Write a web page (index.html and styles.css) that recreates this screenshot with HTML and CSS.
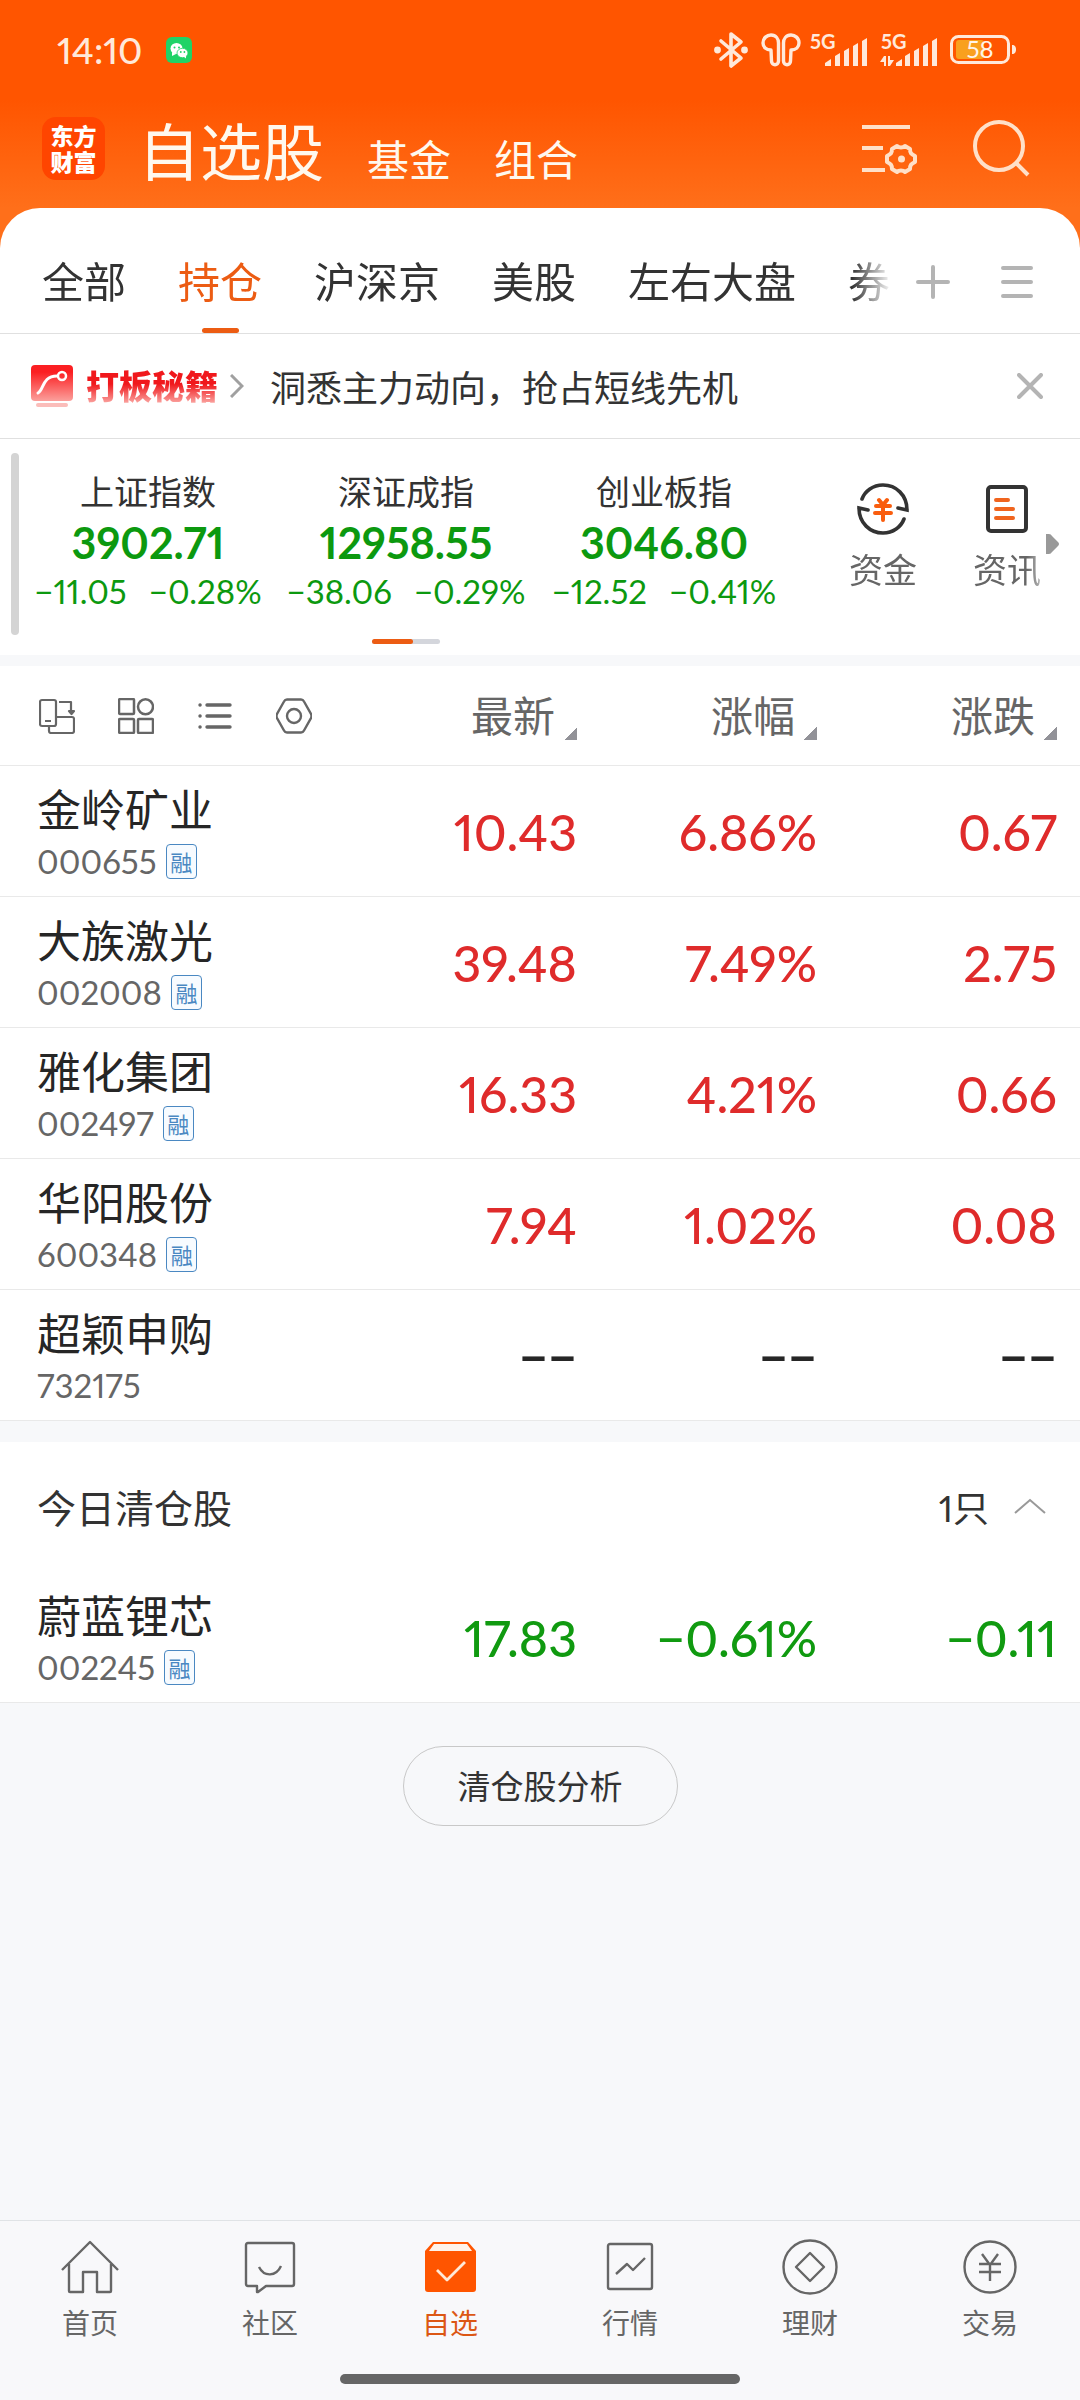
FILE: index.html
```html
<!DOCTYPE html>
<html lang="zh-CN">
<head>
<meta charset="utf-8">
<meta name="viewport" content="width=device-width, initial-scale=1">
<title>自选股</title>
<link rel="stylesheet" href="styles.css">
</head>
<body>
<div class="app">
  <header class="top">
    <div class="status">
      <span class="clock">14:10</span>
      <svg class="wechat" width="26" height="26" viewBox="0 0 26 26"><rect width="26" height="26" rx="6" fill="#1fd367"/><ellipse cx="10.500" cy="11.500" rx="6" ry="5.500" fill="#fff"/><path d="M6 15v4l4-2z" fill="#fff"/><ellipse cx="16.500" cy="16" rx="5.500" ry="4.700" fill="#fff" stroke="#1fd367" stroke-width=".8"/><path d="M17 19l3 2.500v-4z" fill="#fff"/><circle cx="8.500" cy="10.500" r="1" fill="#1fd367"/><circle cx="13" cy="10.500" r="1" fill="#1fd367"/><circle cx="14.800" cy="15" r=".9" fill="#1fd367"/><circle cx="18.400" cy="15" r=".9" fill="#1fd367"/></svg>
      <div class="system">
        <svg width="34" height="38" viewBox="0 0 34 38" fill="none" stroke="#ffe9da" stroke-width="3.600" stroke-linejoin="round" stroke-linecap="round"><path d="M7 10l20 17-10 8V3l10 8L7 28"/><circle cx="3.500" cy="19" r="1.600" fill="#ffe9da"/><circle cx="30.500" cy="19" r="1.600" fill="#ffe9da"/></svg>
        <svg width="40" height="34" viewBox="0 0 40 34" fill="none" stroke="#ffe9da" stroke-width="3.400" stroke-linejoin="round"><path d="M10 17C5 17 2 14 2 10c0-5 4-8 8-8 5 0 7.500 4 7.500 8v18c0 5-7 5-7 0z"/><path d="M30 17c5 0 8-3 8-7 0-5-4-8-8-8-5 0-7.500 4-7.500 8v18c0 5 7 5 7 0z"/></svg>
        <svg class="signal" width="57" height="40" viewBox="0 -5 57 40" fill="#ffe9da"><text x="0" y="14" class="net">5G</text><path d="M15 31v-3l6-4v7zM25 31V21l5-3v13zM34 31V16l5-3v18zM43 31V11l5-3v23zM52 31V6l5-3v28z"/></svg>
        <svg class="signal" width="57" height="40" viewBox="0 -5 57 40" fill="#ffe9da"><text x="1" y="14" class="net">5G</text><path d="M0 27l4-6h2v10H4v-4zM8 21h2v4h4l-4 6H8z"/><path d="M16 31v-3l6-4v7zM25 31V21l5-3v13zM34 31V16l5-3v18zM43 31V11l5-3v23zM52 31V6l5-3v28z"/></svg>
        <svg class="battery" width="66" height="29" viewBox="0 0 66 29"><rect x="1.500" y="1.500" width="57" height="26" rx="7" fill="none" stroke="#ffe9da" stroke-width="3"/><rect x="6" y="5" width="28" height="19" rx="3" fill="#f9a01e"/><path d="M62 10c3 0 4 2 4 4.500S65 19 62 19z" fill="#ffe9da"/><text x="30" y="23" text-anchor="middle" class="charge" fill="#fff4ea">58</text></svg>
      </div>
    </div>
    <div class="brand">
      <a class="logo" href="#"><span>东方</span><span>财富</span></a>
      <nav class="sections">
        <a class="current" href="#">自选股</a>
        <a href="#">基金</a>
        <a href="#">组合</a>
      </nav>
      <button class="tool" aria-label="管理"><svg width="56" height="56" viewBox="0 0 56 56" fill="none" stroke="#ffe0c8" stroke-width="4"><path d="M0 7h48M0 28h21M0 50h23"/><path stroke-linejoin="round" d="M35 26c2 2 6 2 8 0l5 3c0 4 1 5 5 7v6c-4 2-5 3-5 7l-5 3c-2-2-6-2-8 0l-5-3c0-4-1-5-5-7v-6c4-2 5-3 5-7z"/><circle cx="39.500" cy="39" r="3.500" fill="#ffe0c8" stroke="none"/></svg></button>
      <button class="tool" aria-label="搜索"><svg width="58" height="58" viewBox="0 0 58 58" fill="none" stroke="#ffe0c8" stroke-width="4"><circle cx="27" cy="27" r="24"/><path d="M43 43l13 13"/></svg></button>
    </div>
  </header>

  <main class="panel">
    <div class="groups">
      <nav class="tabs">
        <a href="#">全部</a>
        <a class="active" href="#">持仓</a>
        <a href="#">沪深京</a>
        <a href="#">美股</a>
        <a href="#">左右大盘</a>
        <a href="#">券</a>
      </nav>
      <button aria-label="添加分组"><svg width="34" height="34" viewBox="0 0 34 34" stroke="#b4b4b4" stroke-width="4" stroke-linecap="round"><path d="M2 17h30M17 2v30"/></svg></button>
      <button aria-label="全部分组"><svg width="32" height="32" viewBox="0 0 32 32" stroke="#b4b4b4" stroke-width="4" stroke-linecap="round"><path d="M2 2h28M2 16h28M2 30h28"/></svg></button>
    </div>

    <div class="promo">
      <svg width="42" height="42" viewBox="0 0 42 42"><defs><linearGradient id="red" x1="0" y1="0" x2="0" y2="1"><stop offset=".2" stop-color="#fb1f22"/><stop offset="1" stop-color="#fba09c"/></linearGradient></defs><rect width="42" height="36" rx="4" fill="url(#red)"/><rect x="5" y="38" width="32" height="4" rx="2" fill="#fbbdba"/><path d="M7 28c6-3 4-17 19-17" fill="none" stroke="#fff" stroke-width="3" stroke-linecap="round"/><circle cx="31" cy="11" r="4" fill="none" stroke="#fff" stroke-width="2.500"/></svg>
      <a class="promo-name" href="#">打板秘籍</a>
      <svg width="14" height="24" viewBox="0 0 14 24" fill="none" stroke="#a0a0a0" stroke-width="3"><path d="M1 1l11 11L1 23"/></svg>
      <p>洞悉主力动向，抢占短线先机</p>
      <button aria-label="关闭"><svg width="26" height="26" viewBox="0 0 26 26" stroke="#b4b4b4" stroke-width="4" stroke-linecap="round"><path d="M2 2l22 22M24 2L2 24"/></svg></button>
    </div>

    <section class="market">
      <span class="handle"></span>
      <div class="indices">
        <div class="quotes">
          <div class="quote"><h2>上证指数</h2><strong>3902.71</strong><p><span>−11.05</span><span>−0.28%</span></p></div>
          <div class="quote"><h2>深证成指</h2><strong>12958.55</strong><p><span>−38.06</span><span>−0.29%</span></p></div>
          <div class="quote"><h2>创业板指</h2><strong>3046.80</strong><p><span>−12.52</span><span>−0.41%</span></p></div>
        </div>
        <div class="pager"><span></span></div>
      </div>
      <div class="shortcuts">
        <a href="#"><svg width="52" height="52" viewBox="0 0 52 52" fill="none" stroke="#333" stroke-width="3.600"><path stroke-linecap="round" d="M5 16C8 8 16 2 26 2c13 0 24 10 24 25l-9-2M47 36C44 44 36 50 26 50 13 50 2 40 2 25l9 2"/><path stroke="#f95d0e" stroke-width="4" stroke-linecap="round" d="M22 17l4 5 4-5M26 23v14M19 23h14M18 30h16"/></svg>资金</a>
        <a href="#"><svg width="52" height="52" viewBox="0 0 52 52" fill="none" stroke="#333" stroke-width="4"><rect x="7" y="4" width="38" height="44" rx="3"/><path stroke="#f0641e" stroke-linecap="round" d="M15 17h12M15 26h17M15 35h17"/></svg>资讯</a>
      </div>
      <svg class="more" width="13" height="20" viewBox="0 0 13 20"><path d="M0 0h3q2 0 3 2l6 6q2 2 0 4l-6 6q-1 2-3 2H0z" fill="#999"/></svg>
    </section>

    <table class="stocks">
      <thead>
        <tr>
          <th scope="col">
            <div class="views">
              <button aria-label="横屏"><svg width="36" height="36" viewBox="0 0 36 36" fill="none" stroke="#666" stroke-width="2.200" stroke-linejoin="round"><rect x="1" y="2" width="16" height="26" rx="2"/><path d="M6 23h6M20 4h12v9M17 19h16q2 0 2 2v12q0 2-2 2H12q-2 0-2-2v-5"/><path d="M30 13h5l-2.500 3z" fill="#666"/></svg></button>
              <button aria-label="宫格"><svg width="36" height="36" viewBox="0 0 36 36" fill="none" stroke="#666" stroke-width="2.500"><rect x="1" y="1" width="15" height="15" rx="1"/><circle cx="27.500" cy="8.800" r="7.500"/><rect x="1" y="21" width="15" height="14" rx="1"/><rect x="20" y="21" width="15" height="14" rx="1"/></svg></button>
              <button aria-label="列表"><svg width="36" height="36" viewBox="0 0 36 36" fill="#666" stroke="#666" stroke-width="3.400" stroke-linecap="round"><path d="M10 7h23M10 18h23M10 29h23M3 7h.1M3 18h.1M3 29h.1"/></svg></button>
              <button aria-label="设置"><svg width="36" height="36" viewBox="0 0 36 36" fill="none" stroke="#666" stroke-width="2.400" stroke-linejoin="round"><path d="M11 1.500h14q2 0 3 2l7 12.500q1 2 0 4l-7 12.500q-1 2-3 2H11q-2 0-3-2L1 20q-1-2 0-4L8 3.500q1-2 3-2z"/><circle cx="18" cy="18" r="7"/></svg></button>
            </div>
          </th>
          <th scope="col"><button class="sort">最新<span></span></button></th>
          <th scope="col"><button class="sort">涨幅<span></span></button></th>
          <th scope="col"><button class="sort">涨跌<span></span></button></th>
        </tr>
      </thead>
      <tbody class="up">
        <tr><th scope="row"><div class="name">金岭矿业</div><div class="code">000655<em>融</em></div></th><td>10.43</td><td>6.86%</td><td>0.67</td></tr>
        <tr><th scope="row"><div class="name">大族激光</div><div class="code">002008<em>融</em></div></th><td>39.48</td><td>7.49%</td><td>2.75</td></tr>
        <tr><th scope="row"><div class="name">雅化集团</div><div class="code">002497<em>融</em></div></th><td>16.33</td><td>4.21%</td><td>0.66</td></tr>
        <tr><th scope="row"><div class="name">华阳股份</div><div class="code">600348<em>融</em></div></th><td>7.94</td><td>1.02%</td><td>0.08</td></tr>
        <tr class="idle"><th scope="row"><div class="name">超颖申购</div><div class="code">732175</div></th><td>−−</td><td>−−</td><td>−−</td></tr>
      </tbody>
    </table>

    <section class="cleared">
      <div class="cleared-head">
        <h2>今日清仓股</h2>
        <button>1只<svg width="32" height="16" viewBox="0 0 32 16" fill="none" stroke="#999" stroke-width="2"><path d="M1 15L16 2l15 13"/></svg></button>
      </div>
      <table class="stocks">
        <tbody class="down">
          <tr><th scope="row"><div class="name">蔚蓝锂芯</div><div class="code">002245<em>融</em></div></th><td>17.83</td><td>−0.61%</td><td>−0.11</td></tr>
        </tbody>
      </table>
    </section>
    <button class="analyse">清仓股分析</button>
  </main>

  <footer class="bottom">
    <nav>
      <a href="#"><svg width="58" height="58" viewBox="0 0 58 58" fill="none" stroke="#666" stroke-width="2.400" stroke-linejoin="round"><path d="M1 31L29 3l28 28M8 25v27q0 1 1 1h13V33h14v20h13q1 0 1-1V25"/></svg>首页</a>
      <a href="#"><svg width="58" height="58" viewBox="0 0 58 58" fill="none" stroke="#666" stroke-width="2.400" stroke-linejoin="round"><path d="M7 4h44q2 0 2 2v39q0 2-2 2H25l-8 6h-1v-6H7q-2 0-2-2V6q0-2 2-2z"/><path d="M18 28c5 10 17 10 22-1"/></svg>社区</a>
      <a class="here" href="#"><svg width="58" height="58" viewBox="0 0 58 58" fill="none" stroke-linejoin="round"><path d="M4 12l8-9h35l8 9v38q0 3-3 3H7q-3 0-3-3z" fill="#ff5500"/><path d="M13 5h33l5 7H8z" fill="#fff3ea"/><path d="M16 31l10 10 18-18" stroke="#ffe9d8" stroke-width="2.800"/></svg>自选</a>
      <a href="#"><svg width="58" height="58" viewBox="0 0 58 58" fill="none" stroke="#666" stroke-width="2.400" stroke-linejoin="round"><rect x="7" y="5" width="44" height="45" rx="2"/><path d="M15 35l11-10 6 6 12-12"/></svg>行情</a>
      <a href="#"><svg width="58" height="58" viewBox="0 0 58 58" fill="none" stroke="#666" stroke-width="2.400" stroke-linejoin="round"><circle cx="29" cy="28" r="26.500"/><path d="M29 14l14 14-14 14-14-14z"/></svg>理财</a>
      <a href="#"><svg width="58" height="58" viewBox="0 0 58 58" fill="none" stroke="#666" stroke-width="2.400"><circle cx="29" cy="28" r="25.500"/><path d="M21 15l8 11 8-11M29 26v16M18 25h22M18 33h22"/></svg>交易</a>
    </nav>
    <div class="home-bar"></div>
  </footer>
</div>
</body>
</html>
```
FILE: styles.css
```css
* {
  box-sizing: border-box;
}

body,
h2,
p {
  margin: 0;
}

body {
  font-family: Lato, "Noto Sans CJK SC", sans-serif;
  font-variant-numeric: proportional-nums;
  color: #333;
  background: #f7f8fa;
}

a {
  color: inherit;
  text-decoration: none;
}

button {
  padding: 0;
  border: 0;
  background: none;
  color: inherit;
  font: inherit;
  cursor: pointer;
}

svg {
  display: block;
  flex: none;
}

.app {
  display: flex;
  flex-direction: column;
  min-height: 100vh;
}

/* Status bar and page header */
.top {
  padding-bottom: 40px;
  margin-bottom: -40px;
  background: linear-gradient(#ff5500 100px, #ff6f1a 208px);
  color: #fff8ee;
}

.status {
  display: flex;
  align-items: center;
  height: 100px;
  padding: 0 64px 1px 57px;
}

.clock {
  font-size: 37px;
  font-weight: 500;
  color: #ffe9da;
}

.wechat {
  margin-left: 24px;
}

.system {
  display: flex;
  align-items: center;
  gap: 13px;
  margin-left: auto;
}

.signal {
  margin-left: -4px;
}

.signal + .signal {
  margin-left: 0;
}

.net {
  font-size: 20px;
  font-weight: 700;
}

.charge {
  font-size: 24px;
}

.brand {
  display: flex;
  align-items: center;
  height: 108px;
  padding: 0 50px 12px 42px;
}

.logo {
  display: flex;
  flex-direction: column;
  align-items: center;
  justify-content: center;
  width: 63px;
  height: 63px;
  border-radius: 14px;
  background: #ff4500;
  color: #fff;
  font: 900 23px/26px "Noto Sans CJK SC", sans-serif;
}

.sections {
  display: flex;
  align-items: baseline;
  gap: 43px;
  flex: 1;
  margin-left: 33px;
  padding-top: 16px;
  font-size: 42px;
  line-height: 72px;
}

.sections .current {
  font-size: 62px;
}

.tool + .tool {
  margin-left: 54px;
}

/* White sheet */
.panel {
  display: flex;
  flex-direction: column;
  flex: 1;
}

.groups {
  display: flex;
  align-items: center;
  height: 126px;
  padding-right: 47px;
  border-bottom: 1px solid #e0e0e0;
  border-radius: 40px 40px 0 0;
  background: #fff;
}

.tabs {
  display: flex;
  flex: 1;
  gap: 52px;
  height: 125px;
  min-width: 0;
  overflow: hidden;
  margin-right: 24px;
  padding-left: 42px;
  font-size: 42px;
  line-height: 148px;
  white-space: nowrap;
  mask-image: linear-gradient(to left, transparent, #000 40px);
}

.groups button {
  padding-top: 22px;
}

.groups button + button {
  margin-left: 51px;
}

.tabs .active {
  position: relative;
  color: #ec5c13;
}

.tabs .active::after {
  content: "";
  position: absolute;
  left: 50%;
  bottom: 0;
  width: 37px;
  height: 5px;
  margin-left: -18px;
  border-radius: 3px;
  background: #ec5c13;
}

.promo {
  display: flex;
  align-items: center;
  height: 105px;
  padding: 0 37px 0 31px;
  border-bottom: 1px solid #e0e0e0;
  background: #fff;
}

.promo-name {
  margin: 0 12px 0 13px;
  font-size: 33px;
  font-weight: 900;
  line-height: 40px;
  background: linear-gradient(#f0181c 45%, #fbaaa6 95%);
  background-clip: text;
  color: transparent;
}

.promo p {
  flex: 1;
  margin-left: 26px;
  font-size: 36px;
}

/* Indices */
.market {
  position: relative;
  display: flex;
  align-items: flex-start;
  padding: 14px 11px 11px;
  background: #fff;
}

.handle {
  width: 8px;
  height: 182px;
  border-radius: 4px;
  background: #d4d4d4;
}

.indices {
  flex: 1;
  padding-top: 18px;
}

.quotes {
  display: grid;
  grid-template-columns: repeat(3, 1fr);
}

.quote {
  display: flex;
  flex-direction: column;
  align-items: center;
  color: #0c990f;
}

.quote h2 {
  color: #333;
  font-size: 34px;
  font-weight: 400;
  line-height: 42px;
}

.quote strong {
  font-size: 43px;
  line-height: 60px;
}

.quote p {
  display: flex;
  gap: 22px;
  font-size: 33px;
  line-height: 37px;
}

.pager {
  width: 68px;
  height: 5px;
  margin: 29px auto 0;
  border-radius: 3px;
  background: #d4d6dc;
}

.pager span {
  display: block;
  width: 41px;
  height: 5px;
  border-radius: 3px;
  background: #ec5c13;
}

.shortcuts {
  display: flex;
  margin-left: 28px;
  padding-top: 30px;
  color: #666;
  font-size: 34px;
  line-height: 52px;
  mask-image: linear-gradient(to left, transparent 16px, #000 42px);
}

.shortcuts a {
  display: flex;
  flex-direction: column;
  align-items: center;
  gap: 9px;
  width: 124px;
}

.more {
  position: absolute;
  right: 21px;
  top: 95px;
}

/* Stock tables */
.stocks {
  width: 100%;
  table-layout: fixed;
  border-collapse: separate;
  border-spacing: 0;
  background: #fff;
}

.market + .stocks {
  margin-top: 11px;
}

.stocks th,
.stocks td {
  border-bottom: 1px solid #e9e9e9;
}

.stocks th {
  padding: 0;
  font-weight: 400;
  text-align: left;
}

.stocks th:not(:first-child),
.stocks td {
  width: 240px;
  padding: 0 23px 0 0;
  text-align: right;
}

.stocks tr {
  height: 131px;
}

.stocks thead tr {
  height: 100px;
}

.views {
  display: flex;
  gap: 43px;
  padding-left: 39px;
}

.sort {
  display: inline-flex;
  align-items: center;
  gap: 9px;
  color: #666;
  font-size: 42px;
  line-height: 60px;
}

.sort span {
  align-self: flex-end;
  width: 13px;
  height: 13px;
  margin-bottom: 6px;
  background: linear-gradient(135deg, transparent 50%, #929298 50%);
}

.stocks tbody th {
  padding: 18px 0 10px 37px;
}

.name {
  color: #262626;
  font-size: 44px;
  line-height: 52px;
}

.code {
  display: flex;
  align-items: center;
  gap: 9px;
  height: 50px;
  color: #666;
  font-size: 33px;
}

.code em {
  display: grid;
  place-items: center;
  width: 31px;
  height: 35px;
  border: 1px solid #4a88c2;
  border-radius: 4px;
  background: #f7fbff;
  color: #4a88c2;
  font-size: 22px;
  font-style: normal;
}

.stocks tbody td {
  padding-top: 2px;
  font-size: 50px;
  font-weight: 500;
}

.up td {
  color: #df2b2b;
}

.down td {
  color: #109a10;
}

.up .idle td {
  color: #262626;
  font-weight: 700;
}

.cleared {
  margin-top: 21px;
  background: #fff;
}

.cleared-head {
  display: flex;
  align-items: center;
  justify-content: space-between;
  height: 130px;
  padding: 0 34px 2px 37px;
  font-size: 36px;
}

.cleared-head h2 {
  font-size: 39px;
  font-weight: 400;
}

.cleared-head button {
  display: flex;
  align-items: center;
  gap: 25px;
}

.analyse {
  align-self: center;
  height: 80px;
  margin: 43px 0;
  padding: 0 54px 2px;
  border: 1px solid #c8c8c8;
  border-radius: 40px;
  font-size: 33px;
}

/* Bottom navigation */
.bottom {
  position: sticky;
  bottom: 0;
  padding-bottom: 16px;
  border-top: 1px solid #e0e3e6;
  background: #f8f8fa;
}

.bottom nav {
  display: grid;
  grid-template-columns: repeat(6, 1fr);
  padding: 18px 0 31px;
  color: #666;
  font-size: 28px;
  line-height: 40px;
}

.bottom a {
  display: flex;
  flex-direction: column;
  align-items: center;
  gap: 6px;
}

.bottom .here {
  color: #dc5714;
}

.home-bar {
  width: 37%;
  height: 10px;
  margin: 0 auto;
  border-radius: 5px;
  background: #666;
}
```
